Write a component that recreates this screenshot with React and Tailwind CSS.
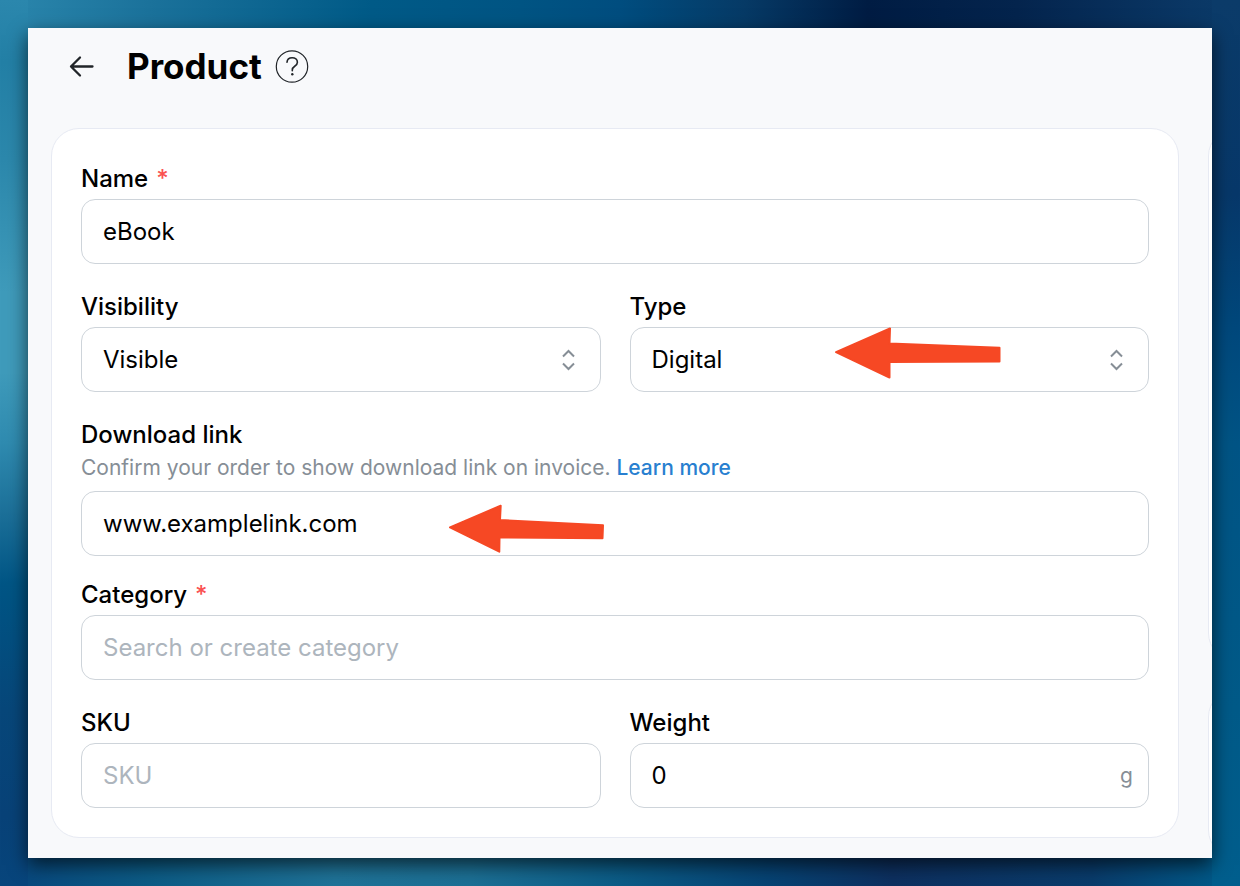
import React, { useState } from 'react';

const inputClass =
  'block h-[65px] w-full rounded-[14px] border border-[#ced4da] bg-white px-[21px] text-2xl text-black outline-none placeholder:text-[#adb5bd] focus:border-blue-500';

function Label({ htmlFor, required, children }) {
  return (
    <label htmlFor={htmlFor} className="block text-2xl leading-[30px] font-medium text-black">
      {children}
      {required && <span className="ml-2 text-[#fa5252]">*</span>}
    </label>
  );
}

function SelectField({ id, label, value, onChange, options, children }) {
  return (
    <div>
      <Label htmlFor={id}>{label}</Label>
      <div className="relative mt-[5px]">
        <select id={id} value={value} onChange={(e) => onChange(e.target.value)} className={`${inputClass} appearance-none`}>
          {options.map((option) => (
            <option key={option}>{option}</option>
          ))}
        </select>
        <svg
          className="pointer-events-none absolute top-1/2 right-6 h-6 w-4 -translate-y-1/2"
          viewBox="0 0 16 24"
          fill="none"
          stroke="#868e96"
          strokeWidth="2"
          aria-hidden="true"
        >
          <path d="M2 8.500 7.500 3l5.500 5.500M2 15.500 7.500 21l5.500-5.500" />
        </svg>
        {children}
      </div>
    </div>
  );
}

export default function App() {
  const [product, setProduct] = useState({
    name: 'eBook',
    visibility: 'Visible',
    type: 'Digital',
    link: 'www.examplelink.com',
    category: '',
    sku: '',
    weight: '0',
  });

  const update = (field, value) => setProduct((prev) => ({ ...prev, [field]: value }));

  return (
    <div className="relative flex min-h-screen bg-[linear-gradient(to_right,#2b87ad_0%,#1b729b_12%,#005a87_30%,#005483_42%,#004d7f_50%,#063a66_60%,#001c43_70%,#04244d_82%,#0a3765_96%,#0b3b69_100%)] p-7 font-['Inter','Liberation_Sans',sans-serif]">
      {/* Backdrop edges */}
      <div className="absolute inset-x-0 bottom-0 h-14 bg-[linear-gradient(to_right,#07457c_0%,#0c5c86_12%,#1f7398_27%,#1c7095_38%,#0b5c87_50%,#064374_62%,#0d3060_72%,#093c6c_88%,#005e8d_100%)]" />
      <div className="absolute inset-y-0 left-0 w-7 bg-[linear-gradient(to_bottom,#2b87ad_0%,#2380a6_7%,#2c88ac_18%,#3f9bbb_33%,#3f9bbb_42%,#2f8bb0_50%,#1c7099_58%,#005585_66%,#07477a_80%,#084278_92%,#07457c_100%)]" />
      <div className="absolute inset-y-0 right-0 w-7 bg-[linear-gradient(to_bottom,#0b3b69_0%,#07386a_22%,#00497d_38%,#005485_50%,#005a88_80%,#005e8d_100%)]" />

      <div className="relative min-w-0 flex-1 bg-[#f8f9fb] shadow-[0_7px_18px_rgba(0,0,0,0.65)]">
        <header className="flex h-[100px] items-start pt-[18px] pl-10">
          <button type="button" aria-label="Back" className="flex h-10 w-[59px] items-center">
            <svg width="28" height="28" viewBox="0 0 28 28" fill="none" stroke="#212529" strokeWidth="2.300" strokeLinecap="round" strokeLinejoin="round">
              <path d="M24.500 14.500H3M12 5.500 3 14.500l9 9" />
            </svg>
          </button>
          <h1 className="text-[35px] leading-10 font-bold text-black">Product</h1>
          <button type="button" aria-label="Help" className="ml-3 flex h-10 items-center">
            <svg width="36" height="36" viewBox="0 0 36 36" fill="none" stroke="#212529" strokeLinecap="round">
              <circle cx="18" cy="18.500" r="15.700" strokeWidth="1.200" />
              <path d="M13 14.200c.2-2.900 2.300-4.500 5.200-4.500s5.200 1.800 5.200 4.500c0 2-1.100 3.100-2.700 4.100-1.700 1.100-2.400 2-2.400 3.800v.6" strokeWidth="1.600" />
              <circle cx="18.300" cy="26.200" r="1.200" fill="#212529" stroke="none" />
            </svg>
          </button>
        </header>

        <div className="flex pb-5 pl-[23px]">
          <form
            className="min-w-0 flex-1 rounded-[28px] border border-[#e7eaf3] bg-white px-[29px] pt-[35px] pb-[29px]"
            onSubmit={(e) => e.preventDefault()}
          >
            <Label htmlFor="name" required>Name</Label>
            <input
              id="name"
              type="text"
              value={product.name}
              onChange={(e) => update('name', e.target.value)}
              className={`${inputClass} mt-[5px]`}
            />

            <div className="mt-7 grid grid-cols-2 gap-[29px]">
              <SelectField
                id="visibility"
                label="Visibility"
                value={product.visibility}
                onChange={(value) => update('visibility', value)}
                options={['Visible', 'Hidden']}
              />
              <SelectField
                id="type"
                label="Type"
                value={product.type}
                onChange={(value) => update('type', value)}
                options={['Digital', 'Physical']}
              >
                <svg
                  className="pointer-events-none absolute top-0 left-[204px] h-[54px] w-[168px]"
                  viewBox="0 0 168 54"
                  fill="#f64824"
                  stroke="#f64824"
                  strokeWidth="2"
                  strokeLinejoin="round"
                  aria-hidden="true"
                >
                  <path d="M2 25.200 56 1.500 55.500 16.500 165.500 20.800V34.500L55.500 35V50.500Z" />
                </svg>
              </SelectField>
            </div>

            <div className="mt-7">
              <Label htmlFor="link">Download link</Label>
              <p className="mt-1 mb-[9px] text-[21px] leading-7 text-[#868e96]">
                Confirm your order to show download link on invoice.{' '}
                <a href="#learn-more" className="font-medium text-[#287fd0]">Learn more</a>
              </p>
              <div className="relative">
                <input
                  id="link"
                  type="text"
                  value={product.link}
                  onChange={(e) => update('link', e.target.value)}
                  className={inputClass}
                />
                <svg
                  className="pointer-events-none absolute top-3 left-[367px] h-[52px] w-[158px]"
                  viewBox="0 0 158 52"
                  fill="#f64824"
                  stroke="#f64824"
                  strokeWidth="2"
                  strokeLinejoin="round"
                  aria-hidden="true"
                >
                  <path d="M2 24.300 52.700 2.700 52 17 155 22.300 154.500 35.300 51.500 34.500 51.300 48.700Z" />
                </svg>
              </div>
            </div>

            <div className="mt-6">
              <Label htmlFor="category" required>Category</Label>
              <input
                id="category"
                type="text"
                placeholder="Search or create category"
                value={product.category}
                onChange={(e) => update('category', e.target.value)}
                className={`${inputClass} mt-[5px]`}
              />
            </div>

            <div className="mt-7 grid grid-cols-2 gap-[29px]">
              <div>
                <Label htmlFor="sku">SKU</Label>
                <input
                  id="sku"
                  type="text"
                  placeholder="SKU"
                  value={product.sku}
                  onChange={(e) => update('sku', e.target.value)}
                  className={`${inputClass} mt-[5px]`}
                />
              </div>
              <div>
                <Label htmlFor="weight">Weight</Label>
                <div className="relative mt-[5px]">
                  <input
                    id="weight"
                    type="text"
                    inputMode="decimal"
                    value={product.weight}
                    onChange={(e) => update('weight', e.target.value)}
                    className={inputClass}
                  />
                  <span className="pointer-events-none absolute inset-y-0 right-4 flex items-center text-[21px] text-[#868e96]">g</span>
                </div>
              </div>
            </div>
          </form>

          {/* Side column, cut off by the panel edge */}
          <div className="-mb-5 ml-[29px] w-1 shrink-0 overflow-hidden">
            <div className="h-[533px] w-20 rounded-[28px] border border-[#e7eaf3] bg-white" />
            <div className="mt-7 h-[169px] w-20 rounded-[28px] border border-[#e7eaf3] bg-white" />
          </div>
        </div>
      </div>
    </div>
  );
}
